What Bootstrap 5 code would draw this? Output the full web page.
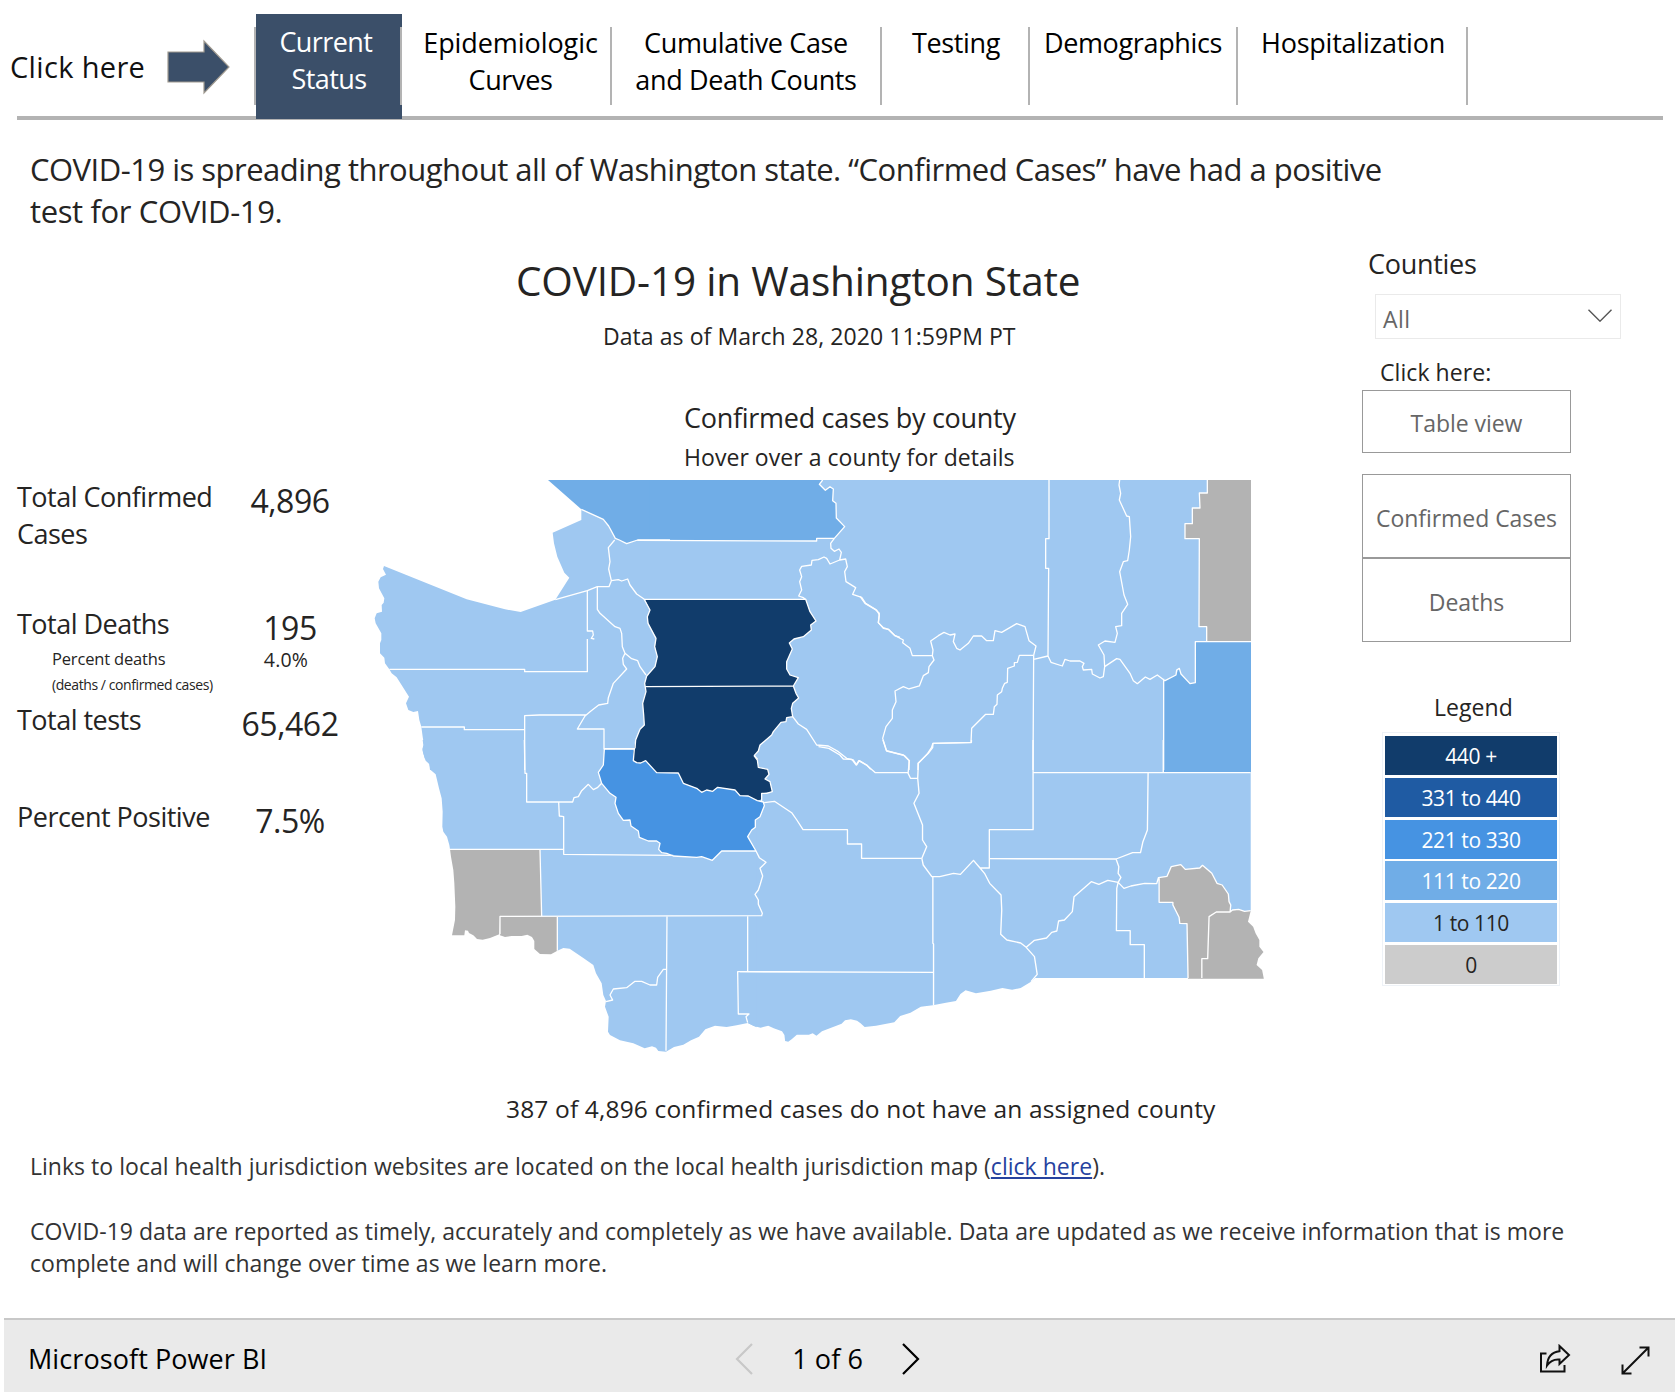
<!DOCTYPE html>
<html lang="en">
<head>
<meta charset="utf-8">
<meta name="viewport" content="width=device-width, initial-scale=1">
<title>COVID-19 in Washington State</title>
<link href="https://cdn.jsdelivr.net/npm/bootstrap@5.3.0/dist/css/bootstrap.min.css" rel="stylesheet">
<style>
body{font-family:"Open Sans","Noto Sans",sans-serif;color:#252423;background:#fff;width:1679px;height:1396px;overflow:hidden}
.t{white-space:nowrap}
.fs-a{font-size:27px;line-height:37px;letter-spacing:-.0105em}
.fs-b{font-size:23px;line-height:32px;letter-spacing:.003em}
.topbar{height:120px;margin:0 16px 0 17px;padding-top:14px;border-bottom:4px solid #b3b3b3}
.cue{width:239px}
.cue-text{font-size:29px;line-height:38px;letter-spacing:.012em;margin-left:-7px;padding-top:3px;color:#111}
.cue svg{margin:4px 25px 0 auto}
.tabs{--bs-nav-link-padding-x:0;--bs-nav-link-padding-y:0;letter-spacing:-.013em}
.tabs .nav-link{color:#000;text-align:center;padding-top:9.500px;background:linear-gradient(#b3b3b3,#b3b3b3) right top 13px/2px 78px no-repeat}
.tabs .nav-link.active{color:#fff;padding-top:8.500px;background-color:#3b4f69;margin-bottom:-3px;letter-spacing:-.022em}
.w1{width:146px}.w2{width:210px}.w3{width:270px}.w4{width:148px}.w5{width:208px}.w6{width:230px}
.w2{padding-left:7px!important}.w2 span{letter-spacing:-.003em}
.w3{padding-right:2px!important}.w5{padding-right:2px!important}
.w6{letter-spacing:-.0085em}
.first-sep{width:2px;height:78px;margin-top:13px;background:#b3b3b3;margin-left:-2px}
.intro{font-size:31px;line-height:42px;letter-spacing:-.0165em;margin:28px 0 -1px 30px}
.intro span{letter-spacing:-.012em}
.main-row{height:919px}
.stats{width:370px;padding:247px 0 0 17px}
.stats .fs-a{letter-spacing:-.019em}
.row-1{height:127px}.row-2{height:96px}.row-3{height:97px}
.stat-l{width:213px}
.stat-v{width:120px;text-align:center;font-size:32px;line-height:45px;letter-spacing:-.014em}
.pct{font-size:16.5px;line-height:22px;letter-spacing:-.01em;margin:6px 0 0 35px}
.pct-v{font-size:19.5px;line-height:24px;letter-spacing:.01em;margin:-2px 8px 0 0}
.pct2{font-size:14px;line-height:20px;letter-spacing:-.03em;margin:5px 0 0 35px}
.mapcol{width:920px;padding-top:22.500px}
.title{font-size:40.5px;line-height:54px;letter-spacing:-.004em;padding-left:146px;margin:0;font-weight:400}
.asof{margin-top:12px;padding-left:233px}
.map-head{margin-top:47px;padding-left:314px}
.map-sub{margin-top:5px;padding-left:314px;letter-spacing:.002em}
.map{margin-top:2.500px}
.unassigned{font-size:24.5px;line-height:32px;letter-spacing:.0065em;margin-top:38px;padding-left:136px}
.side{width:389px;padding:14px 0 0 72px}
.side-h{margin-left:6px}
.slicer{width:246px;height:45px;margin:12px 0 0 13px;border:1.5px solid #eaeaea;color:#666;padding:4px 8px 0 7px;letter-spacing:.02em}
.slicer svg{margin-top:-6px}
.side-cue{margin:17px 0 2px 18px}
.btn-v{width:209px;height:84px;border:1.5px solid #999;border-radius:0!important;color:#666;background:#fff;padding:3px 0 0;display:flex;align-items:center;justify-content:center;letter-spacing:-.002em}
.btn-table{height:63px}
.stack-2{width:209px;margin-top:21px}
.stack-2 .btn-v+.btn-v{margin-top:0}
.legend-h{margin:49px 0 0 72px}
.legend-box{width:178px;margin:9px 0 0 20px;padding:3px 2px 0;border:1px solid #eef2f7;height:254px}
.lg{height:39px;margin-bottom:2.8px;font-size:21px;line-height:40px;letter-spacing:-.019em;text-align:center;color:#fff}
.lg.dk{color:#252423}
.k5{background:#113c6b}.k4{background:#1f5ba3}.k3{background:#4693e2}.k2{background:#70ade7}.k1{background:#9fc8f1}.k0{background:#ccc}
.note{color:#333;margin-left:30px;letter-spacing:.0012em}
.note-2{margin-top:33px}
.note-2{letter-spacing:.0006em}
.note a{color:#26429f}
.foot{height:74px;margin:39px 4px 0;padding:5px 25px 0 24px;border-top:2px solid #c8c8c8;background:#eaeaea;color:#000;letter-spacing:.003em}
.pager{margin-left:468px;gap:39px}
.borders path{fill:none;stroke:#fff;stroke-width:3.9;stroke-linejoin:round}
.c1{fill:#9fc8f1}.c2{fill:#70ade7}.c3{fill:#4693e2}.c5{fill:#113c6b}.c0{fill:#b3b3b3}
</style>
</head>
<body>
<header class="topbar d-flex">
  <div class="cue d-flex align-items-center flex-shrink-0">
    <span class="cue-text t">Click here</span>
    <svg width="64" height="56" viewBox="0 0 64 56"><path d="M1 13H37V2L62 28 37 54V43H1Z" fill="#3b4f69" stroke="#a09a90" stroke-width="1.2"/></svg>
  </div>
  <div class="first-sep flex-shrink-0"></div>
  <nav class="nav tabs fs-a t flex-nowrap">
    <a class="nav-link active w1" href="#">Current&nbsp;<br>Status</a>
    <a class="nav-link w2" href="#"><span>Epidemiologic</span><br>Curves</a>
    <a class="nav-link w3" href="#">Cumulative Case<br>and Death Counts</a>
    <a class="nav-link w4" href="#">Testing</a>
    <a class="nav-link w5" href="#">Demographics</a>
    <a class="nav-link w6" href="#">Hospitalization</a>
  </nav>
</header>
<p class="intro t">COVID-19 is spreading throughout all of Washington state. “Confirmed Cases” have had a positive<br><span>test for COVID-19.</span></p>
<main class="main-row d-flex">
  <section class="stats flex-shrink-0 t">
    <div class="d-flex row-1"><div class="stat-l fs-a">Total Confirmed<br>Cases</div><div class="stat-v">4,896</div></div>
    <div class="d-flex row-2">
      <div class="stat-l"><div class="fs-a">Total Deaths</div><div class="pct">Percent deaths</div><div class="pct2">(deaths / confirmed cases)</div></div>
      <div><div class="stat-v">195</div><div class="pct-v text-center">4.0%</div></div>
    </div>
    <div class="d-flex row-3"><div class="stat-l fs-a">Total tests</div><div class="stat-v">65,462</div></div>
    <div class="d-flex"><div class="stat-l fs-a">Percent Positive</div><div class="stat-v">7.5%</div></div>
  </section>
  <section class="mapcol flex-shrink-0">
    <h1 class="title t">COVID-19 in Washington State</h1>
    <div class="fs-b t asof">Data as of March 28, 2020 11:59PM PT</div>
    <div class="fs-a t map-head">Confirmed cases by county</div>
    <div class="fs-b t map-sub">Hover over a county for details</div>
    <svg class="d-block map" width="900" height="580" viewBox="370 475 900 580">
      <!-- county fills, one group per map quadrant -->
      <g transform="translate(370 470) scale(.33333)">
        <path class="c1" d="M634 118V150L548 188 552 220 562 260 583 308 598 323 556 389 452 426 405 418 290 388 42 288 39 297 48 314 32 322 25 335 27 355 43 385 41 398 35 405 36 425 20 430 14 445 17 460 34 490 34 510 30 520 30 550 43 563 45 580 58 598 65 610 80 622 117 680 108 700 115 720 130 726 144 723 148 750 154 770 158 800 162 825 158 835 160 850 167 872 178 882 180 900H900V100Z"/>
      </g>
      <g transform="translate(600 470) scale(.33333)"><path class="c1" d="M0 120V900H900V30H600Z"/></g>
      <g transform="translate(860 470) scale(.33333)"><path class="c1" d="M0 30H1173V900H0Z"/></g>
      <g transform="translate(740 740) scale(.34439 .33333)">
        <path class="c1" d="M0 0V846L22 848 40 858 60 863 82 857 98 865 122 874 129 885 131 903 140 905 150 898 165 884 200 884 211 880 222 887 238 874 295 851 305 841 322 838 340 842 350 850 362 861 395 857 448 847 465 828 495 818 525 800 560 796 598 788 627 783 640 762 655 751 685 760 728 752 762 744 790 749 815 744 845 725 857 714H1300L1483 512V0Z"/>
        <path class="c0" d="M1217 413 1240 409 1252 380 1280 374 1293 388 1335 384 1343 376 1370 400 1385 430 1400 435 1418 462 1420 485 1425 495 1423 516 1430 510 1448 508 1465 514 1483 512 1475 545 1490 560 1497 580 1508 600V620L1520 636 1505 655 1500 675 1516 690 1521 716H1301L1298 551 1277 550 1275 532 1257 495V487H1217Z"/>
      </g>
      <g transform="translate(400 740) scale(.33333)">
        <path class="c1" d="M68 0 70 15 67 30 74 55 88 72 92 90 107 103 117 145 125 175 128 215 127 260 130 275 141 290 148 315 150 328 300 450 472 632 490 624 509 626 550 654 580 675 588 700 605 730 610 765 618 783 615 800 626 830 624 875 630 885 660 901 700 910 734 925 756 919 768 923 775 933 798 935 822 921 850 914 873 901 897 890 916 868 945 857 980 861 1010 856 1043 849 1070 862V0Z"/>
        <path class="c0" d="M150 328H420L425 528H300L298 583 270 594 248 599 231 597 220 586 207 579 204 572 195 571 193 586H156L165 540 166 500 163 430 160 390 153 350Z"/>
        <path class="c0" d="M300 529H472V632L453 643 420 642 403 627V603L396 591 382 584 365 588H335L315 591 300 586Z"/>
        <path class="c5" d="M706 0 703 27 700 62 710 68 722 69 737 62 770 98 835 99 850 130 890 145 905 157 920 150 938 154 953 142 1005 150 1020 167 1045 168 1072 182 1085 178V160L1117 155 1110 125 1095 117 1107 103 1103 88 1075 82 1072 60 1062 47 1075 33 1080 15 1090 0Z"/>
        <path class="c3" d="M613 27H703L700 62 710 68 722 69 737 62 770 98 835 99 850 130 890 145 905 157 920 150 938 154 953 142 1005 150 1020 167 1045 168 1072 182 1090 186 1093 197 1080 230 1066 240V262L1055 270 1043 290 1068 333H965L937 361 905 350 890 352 820 348 800 340 785 338 776 328 780 310 770 303 745 303 718 292 715 273 693 258 690 240 670 241 655 220 645 190 648 172 630 160 605 130 595 97 610 75Z"/>
      </g>
      <g transform="translate(370 470) scale(.33333)"><path class="c2" d="M534 30 634 118 700 148 716 168 736 205 748 210 770 221 803 210H900V30Z"/></g>
      <g transform="translate(600 470) scale(.33333)">
        <path class="c2" d="M150 30V211L650 213V205H703L734 170 709 144 708 100 698 92 700 57 690 50 676 61 658 43 668 30Z"/>
        <path class="c5" d="M135 388 150 420 142 440 145 460 168 505 165 530 172 560 165 590 140 618 134 640 138 665 128 700 131 735 133 765 120 778 107 810 105 835 100 845 102 872 112 878 125 878 137 872 165 900H500L480 893 470 885 473 868 463 856 475 843 480 825 515 795 520 785 543 757 558 755 560 743 578 740 574 715 578 700 596 684 588 670 580 648 595 623 570 615 560 597V575L577 537 568 519 582 507 610 500 634 480 632 465 648 453 630 425 617 388Z"/>
      </g>
      <g transform="translate(860 470) scale(.33333)">
        <path class="c0" d="M1042 30V69H1018L1020 114H997V161H975V206H1018L1017 470H1040V515H1173V30Z"/>
        <path class="c2" d="M1006 515H1173V908H911V626L915 632 948 615 958 595 963 612 990 641 1006 638Z"/>
      </g>
      <!-- county lines -->
      <g class="borders">
        <g transform="translate(370 470) scale(.33333)">
          <path d="M634 118 700 148 716 168 736 205 748 210 770 221 803 210H900M734 210 715 233 720 275 716 297 724 332 717 350H682L652 362 556 389M724 332 745 329 755 333 773 327 780 345 800 372 822 387M822 387 840 420 832 440 834 460 858 505 854 530 862 560 855 590 830 618 824 640 828 665 818 700 821 735 823 765 810 778 797 810 795 835"/>
          <path d="M652 362V483H668L670 495 664 505 673 507M652 507V605H464V598H58M682 350V418L690 430 735 470 750 475 755 490 757 530 765 550 785 566 803 572 810 590 828 615M765 550 758 565 760 583 770 597 730 640 715 683 713 700 686 705 660 725 645 738 622 777H702V836H795M648 735H508L464 737V900M154 771H283V779H464"/>
        </g>
        <g transform="translate(600 470) scale(.33333)">
          <path d="M112 211 650 213V205H703L734 170 709 144 708 100 698 92 700 57 690 50 676 61 658 43 668 30M703 205 692 220 693 235 703 244 717 237 724 247 719 270 690 282 680 265 672 261 655 269 636 271 634 285 605 289 599 300 605 320 599 335 605 360 596 378 610 383 617 388H132M719 270 737 267 742 290 734 305 738 335 767 353 758 373 785 382 797 400 830 420 838 435 835 458 850 473 865 478 885 497 900 502"/>
          <path d="M617 388 630 425 648 453 632 465 634 480 610 500 582 507 568 519 577 537 560 575V597L570 615 595 623 580 648 588 670 596 684 578 700 574 715 578 740 560 743 558 755 543 757 520 785 515 795 480 825 475 843 463 856 473 868M136 650 580 648M578 740 595 762 620 778 650 825 685 828 715 845 740 865 760 870 770 885 778 872 800 885 812 898"/>
        </g>
        <g transform="translate(860 470) scale(.33333)">
          <path d="M567 30V206H557V295H566L564 558 521 568M521 556 519 900M779 30 777 45 782 70 778 90 800 138 808 140 812 200 808 240 803 272 790 275 779 305 792 375 803 403 785 430V467L767 470 772 490 765 517 735 513 715 525 732 555 734 590 730 620 720 624 697 612 695 598 670 600 667 590 672 580 660 573H630L615 568 607 588 573 577 564 558M734 590 770 566 780 568 810 610 820 632 832 641 856 621 870 628 892 615 915 632 948 615 950 600 958 595 963 612 990 641 1006 638V515H1173M911 626V900"/>
          <path d="M1042 30V69H1018L1020 114H997V161H975V206H1018L1017 470H1040V515M0 379 15 400 45 418 58 430 55 458 70 475 85 478 105 497 130 510 128 518 150 535 157 557H217L219 540 212 513 235 497 252 487 270 495 285 492 280 515 290 535 300 540 325 520 340 498H365L380 512H400L405 482 425 487 470 461 495 470 507 512 528 528 521 556M217 557 222 570 207 590 205 608 190 617 178 648 147 657 130 650 105 663 108 695 97 720V745L78 770 68 805 80 843 130 855 147 872V900"/>
          <path d="M521 556H478L472 577 463 578V588L443 595 442 637 434 640 427 655 425 665 412 675 411 703 403 710 400 733H377L335 775 333 818 219 820 218 833 205 850 174 880V900"/>
        </g>
        <g transform="translate(400 740) scale(.33333)">
          <path d="M373 0 375 100H380V186H518L522 173 535 170 545 152 565 133 580 149 592 143 605 130M476 186 478 228 491 230V343L820 346M150 328H491M420 330 425 528M300 583V529L1087 527M472 530V632M1068 333 1078 353 1098 367 1080 385 1088 408 1080 435 1075 450 1065 463 1075 480V493L1087 520 1085 527M801 528 798 932M798 688H790L773 712 770 735H750L725 724H705L680 743 640 747 630 765 638 780 618 785M1043 528V693M1200 695H1013L1015 822H1047L1038 830 1043 848"/>
          <path d="M613 27H703L700 62 710 68 722 69 737 62 770 98 835 99 850 130 890 145 905 157 920 150 938 154 953 142 1005 150 1020 167 1045 168 1072 182 1090 186 1093 197 1080 230 1066 240V262L1055 270 1043 290 1068 333H965L937 361 905 350 890 352 820 348 800 340 785 338 776 328 780 310 770 303 745 303 718 292 715 273 693 258 690 240 670 241 655 220 645 190 648 172 630 160 605 130 595 97 610 75ZM1085 182V160L1100 160 1117 155 1110 125 1095 117 1107 103 1103 88 1075 82 1072 60 1062 47"/>
        </g>
        <g transform="translate(740 740) scale(.34439 .33333)">
          <path d="M228 20 258 25 290 45 300 57 325 58 337 75 345 62 370 77 393 98H487M415 0 425 32 478 47 492 62 488 100 495 115H516M672 0V7L560 10 556 23 545 40 518 70 516 115 520 160 505 190 530 255V300L542 320 528 355 532 375 557 410H580L620 400 640 403 678 361 697 384H724V269H851V0M697 384 710 400 725 430 758 465 760 510 757 583 775 600 815 609 831 622 855 650 863 703 845 725M831 622 855 601 890 594 905 577 920 573 925 543 942 540 965 515 970 470 1020 425 1042 433 1068 421 1098 427"/>
          <path d="M724 356 1092 357 1100 380 1098 400 1106 412 1098 427 1094 445 1093 572H1133V614H1174V714M1098 427 1115 445 1135 438 1175 430 1210 431 1215 413 1240 409 1252 380 1280 374 1293 388 1335 384 1343 376 1370 400 1385 430 1400 435 1418 462 1420 485 1425 495 1423 516 1430 510 1448 508 1465 514 1483 512M851 98H1483M1229 0V98M1185 98 1183 270 1170 305 1163 338 1140 338 1092 357M1217 413V487H1257V495L1275 532 1277 550 1298 551 1301 714M1423 516H1383L1362 530 1358 656H1341V714"/>
          <path d="M70 188 100 184 150 218 165 240 183 269H312V312H353V355H527M560 410V610L562 612V796M0 695 562 697"/>
        </g>
      </g>
    </svg>
    <div class="t unassigned">387 of 4,896 confirmed cases do not have an assigned county</div>
  </section>
  <aside class="side flex-shrink-0 t">
    <div class="fs-a side-h">Counties</div>
    <div class="slicer fs-b d-flex align-items-center">All<svg class="ms-auto" width="24" height="13" viewBox="0 0 24 13" fill="none" stroke="#555" stroke-width="1.4"><path d="M.5.7 12 12.2 23.5.7"/></svg></div>
    <div class="fs-b side-cue">Click here:</div>
    <button class="btn fs-b btn-v btn-table">Table view</button>
    <div class="btn-group-vertical stack-2">
      <button class="btn fs-b btn-v">Confirmed Cases</button>
      <button class="btn fs-b btn-v">Deaths</button>
    </div>
    <div class="fs-b legend-h">Legend</div>
    <div class="legend-box">
      <div class="lg k5">440 +</div>
      <div class="lg k4">331 to 440</div>
      <div class="lg k3">221 to 330</div>
      <div class="lg k2">111 to 220</div>
      <div class="lg k1 dk">1 to 110</div>
      <div class="lg k0 dk">0</div>
    </div>
  </aside>
</main>
<p class="fs-b t mb-0 note">Links to local health jurisdiction websites are located on the local health jurisdiction map (<a href="#">click here</a>).</p>
<p class="fs-b t mb-0 note note-2">COVID-19 data are reported as timely, accurately and completely as we have available. Data are updated as we receive information that is more<br>complete and will change over time as we learn more.</p>
<footer class="d-flex align-items-center fs-a t foot">
  <span>Microsoft Power BI</span>
  <div class="d-flex align-items-center pager">
    <svg width="18" height="32" viewBox="0 0 18 32" fill="none" stroke="#c8c8c8" stroke-width="2.2"><path d="M17 1 2 16 17 31"/></svg>
    <span>1 of 6</span>
    <svg width="18" height="32" viewBox="0 0 18 32" fill="none" stroke="#000" stroke-width="2.2"><path d="M1 1 16 16 1 31"/></svg>
  </div>
  <div class="d-flex align-items-center ms-auto">
    <svg width="32" height="30" viewBox="0 0 32 30" fill="none" stroke="#111" stroke-width="2"><path d="M7.500 9.500H2V27.500H25.500V21M20.500 2 30 11 20.500 20V15.500C15 15 11 17 8 21.500 8.500 13 13 8 20.500 7.200Z"/></svg>
    <svg width="29" height="29" viewBox="0 0 29 29" style="margin-left:50px;margin-top:4px" fill="none" stroke="#111" stroke-width="2"><path d="M1.500 27.500 27.500 1.500M18.500 1.500H27.500V10.500M1.500 18.500V27.500H10.500"/></svg>
  </div>
</footer>
<script src="https://cdn.jsdelivr.net/npm/bootstrap@5.3.0/dist/js/bootstrap.bundle.min.js"></script>
</body>
</html>
